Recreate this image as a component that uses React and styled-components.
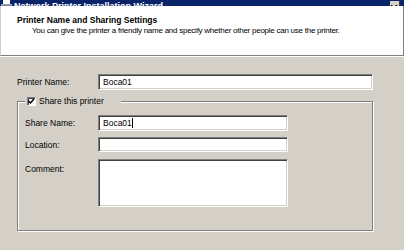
import styled, { createGlobalStyle } from 'styled-components';

const Global = createGlobalStyle`
  html, body { margin: 0; padding: 0; background: #d4d0c8; }
  body { font-family: "Liberation Sans", Arial, sans-serif; font-size: 8.5px; color: #000; }
`;

const Window = styled.div`
  width: 404px;
  height: 250px;
  overflow: hidden;
  background: #d4d0c8;
  display: flex;
  flex-direction: column;
`;

const TitleBar = styled.div`
  height: 6px;
  flex: none;
  background: #0a246a;
  display: flex;
  align-items: flex-end;
  overflow: hidden;
  padding: 0 4px 0 1px;
`;

const TitleIcon = styled.svg`
  width: 11px;
  height: 11px;
  margin-bottom: -5px;
  flex: none;
`;

const TitleText = styled.span`
  color: #fff;
  font-weight: bold;
  font-size: 9px;
  line-height: 10px;
  margin: 0 0 -5px 2px;
  white-space: nowrap;
  flex: 1;
`;

const CloseButton = styled.span`
  width: 10px;
  height: 10px;
  margin-bottom: -5px;
  background: #d4d0c8;
  border-right: 1px solid #404040;
  box-sizing: border-box;
  display: flex;
  align-items: flex-end;
  justify-content: center;
  flex: none;
`;

const Header = styled.div`
  height: 50px;
  flex: none;
  background: #fff;
  border-left: 1px solid #d4d0c8;
  border-right: 1px solid #808080;
  border-bottom: 1px solid #808080;
  box-shadow: 0 1px 0 #fff;
  padding: 9px 0 0 16px;
  box-sizing: border-box;
`;

const HeaderTitle = styled.div`
  font-weight: bold;
  font-size: 8.5px;
  line-height: 10px;
`;

const HeaderSub = styled.div`
  margin: 1px 0 0 15px;
  font-size: 8px;
  letter-spacing: -0.25px;
  line-height: 10px;
  white-space: nowrap;
`;

const Body = styled.div`
  padding: 18px 0 0 17px;
`;

const Row = styled.div`
  display: flex;
  align-items: ${p => (p.$top ? 'flex-start' : 'center')};
  margin-top: ${p => p.$gap || 0}px;
`;

const Label = styled.label`
  width: ${p => p.$w}px;
  flex: none;
  padding-top: ${p => (p.$top ? 5 : 0)}px;
`;

const TextBox = styled.div`
  width: ${p => p.$w}px;
  height: ${p => p.$h || 16}px;
  box-sizing: border-box;
  background: #fff;
  border-style: solid;
  border-width: 1px;
  border-color: #808080 #fff #fff #808080;
  box-shadow: inset 1px 1px 0 #404040, inset -1px -1px 0 #d4d0c8;
  padding: 2px 0 0 4px;
  line-height: 10px;
  white-space: nowrap;
`;

const Caret = styled.span`
  display: inline-block;
  width: 1px;
  height: 10px;
  background: #000;
  vertical-align: top;
`;

const Group = styled.fieldset`
  margin: 6px 0 0 0;
  width: 356px;
  box-sizing: border-box;
  border: 1px solid #808080;
  box-shadow: 1px 1px 0 #fff, inset 1px 1px 0 #fff;
  padding: 9px 0 23px 7px;
`;

const Legend = styled.legend`
  padding: 0 17px 0 2px;
  background: #d4d0c8;
  display: flex;
  align-items: center;
  line-height: 10px;
`;

const Check = styled.span`
  width: 9px;
  height: 9px;
  box-sizing: border-box;
  background: #fff;
  border-style: solid;
  border-width: 1px;
  border-color: #808080 #fff #fff #808080;
  box-shadow: inset 1px 1px 0 #404040;
  margin-right: 3px;
  display: flex;
`;

export default function App() {
  return (
    <Window>
      <Global />
      <TitleBar>
        <TitleIcon viewBox="0 0 11 11">
          <rect x="2" y="0" width="7" height="4" fill="#fff" />
          <rect x="0" y="4" width="11" height="5" fill="#a8a8a8" />
          <rect x="1" y="5" width="9" height="2" fill="#6c84b8" />
        </TitleIcon>
        <TitleText>Network Printer Installation Wizard</TitleText>
        <CloseButton>
          <svg width="7" height="6" viewBox="0 0 7 6">
            <path d="M0 0 L6 6 M6 0 L0 6" stroke="#000" strokeWidth="1.4" />
          </svg>
        </CloseButton>
      </TitleBar>
      <Header>
        <HeaderTitle>Printer Name and Sharing Settings</HeaderTitle>
        <HeaderSub>You can give the printer a friendly name and specify whether other people can use the printer.</HeaderSub>
      </Header>
      <Body>
        <Row>
          <Label $w={81}>Printer Name:</Label>
          <TextBox $w={275}>Boca01</TextBox>
        </Row>
        <Group>
          <Legend>
            <Check>
              <svg width="7" height="7" viewBox="0 0 7 7">
                <path d="M0.5 3 L2.5 5 L6 1" stroke="#000" strokeWidth="1.5" fill="none" />
              </svg>
            </Check>
            Share this printer
          </Legend>
          <Row>
            <Label $w={73}>Share Name:</Label>
            <TextBox $w={190}>Boca01<Caret /></TextBox>
          </Row>
          <Row $gap={6}>
            <Label $w={73}>Location:</Label>
            <TextBox $w={190} $h={15} />
          </Row>
          <Row $gap={7} $top>
            <Label $w={73} $top>Comment:</Label>
            <TextBox $w={190} $h={48} />
          </Row>
        </Group>
      </Body>
    </Window>
  );
}
